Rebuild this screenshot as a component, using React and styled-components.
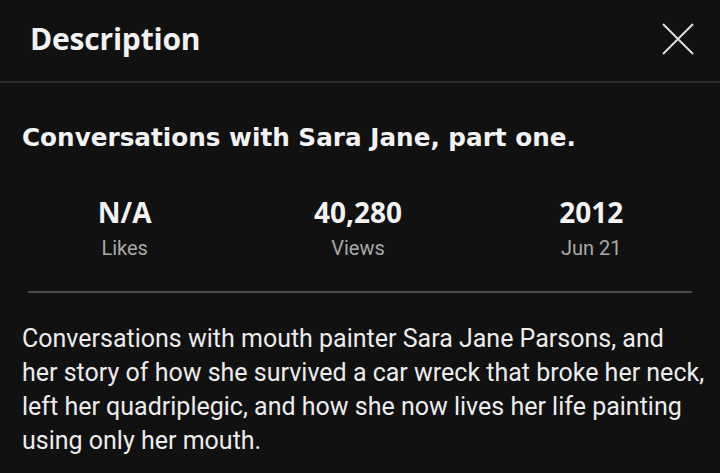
import React from "react";
import styled, { createGlobalStyle } from "styled-components";

const GlobalStyle = createGlobalStyle`
  html, body {
    margin: 0;
    padding: 0;
    background: #111111;
  }
  body {
    font-family: Roboto, "Liberation Sans", sans-serif;
    color: #f0f0f0;
  }
`;

const stats = [
  { value: "N/A", label: "Likes" },
  { value: "40,280", label: "Views" },
  { value: "2012", label: "Jun 21" },
];

const lines = [
  "Conversations with mouth painter Sara Jane Parsons, and",
  "her story of how she survived a car wreck that broke her neck,",
  "left her quadriplegic, and how she now lives her life painting",
  "using only her mouth.",
];

export default function App() {
  return (
    <Sheet>
      <GlobalStyle />
      <Header>
        <Heading>Description</Heading>
        <CloseButton aria-label="Close">
          <svg width="32" height="32" viewBox="0 0 32 32">
            <path d="M1 1 L31 31 M31 1 L1 31" stroke="#dcdcdc" strokeWidth="2" fill="none" />
          </svg>
        </CloseButton>
      </Header>
      <Body>
        <Title>Conversations with Sara Jane, part one.</Title>
        <StatsRow>
          {stats.map((s) => (
            <Stat key={s.label}>
              <StatValue>{s.value}</StatValue>
              <StatLabel>{s.label}</StatLabel>
            </Stat>
          ))}
        </StatsRow>
        <Rule />
        <Text>
          {lines.map((l, i) => (
            <Line key={i}>{l}</Line>
          ))}
        </Text>
      </Body>
    </Sheet>
  );
}

const Sheet = styled.div`
  width: 720px;
  height: 473px;
  overflow: hidden;
  background: #111111;
`;

const Header = styled.div`
  display: flex;
  align-items: center;
  justify-content: space-between;
  height: 83px;
  padding: 0 26px 0 30px;
  border-bottom: 2px solid #2b2b2b;
  box-sizing: border-box;
`;

const Heading = styled.h1`
  margin: 0;
  font-family: "Open Sans", Lato, sans-serif;
  font-weight: 700;
  font-size: 30px;
  letter-spacing: -0.2px;
  color: #f2f2f2;
  padding-bottom: 4px;
`;

const CloseButton = styled.button`
  display: flex;
  background: none;
  border: 0;
  padding: 0;
  margin-bottom: 4px;
  cursor: pointer;
`;

const Body = styled.div`
  padding: 0 22px;
`;

const Title = styled.h2`
  margin: 38px 0 0;
  font-family: "DejaVu Sans", "Open Sans", sans-serif;
  font-weight: 700;
  font-size: 24.7px;
  line-height: 34px;
  color: #f2f2f2;
`;

const StatsRow = styled.div`
  display: grid;
  grid-template-columns: repeat(3, 1fr);
  margin: 40px -10px 0 -14px;
`;

const Stat = styled.div`
  display: flex;
  flex-direction: column;
  align-items: center;
`;

const StatValue = styled.div`
  font-family: "Open Sans", Lato, sans-serif;
  font-weight: 700;
  font-size: 28px;
  line-height: 34px;
  color: #f2f2f2;
`;

const StatLabel = styled.div`
  margin-top: 6px;
  font-size: 20px;
  line-height: 26px;
  color: #a9a9a9;
`;

const Rule = styled.hr`
  margin: 30px 6px 0;
  border: 0;
  height: 2px;
  background: #4a4a4a;
`;

const Text = styled.p`
  margin: 29px 0 0;
  font-size: 25px;
  line-height: 34px;
  color: #ececec;
`;

const Line = styled.span`
  display: block;
  white-space: nowrap;
`;
